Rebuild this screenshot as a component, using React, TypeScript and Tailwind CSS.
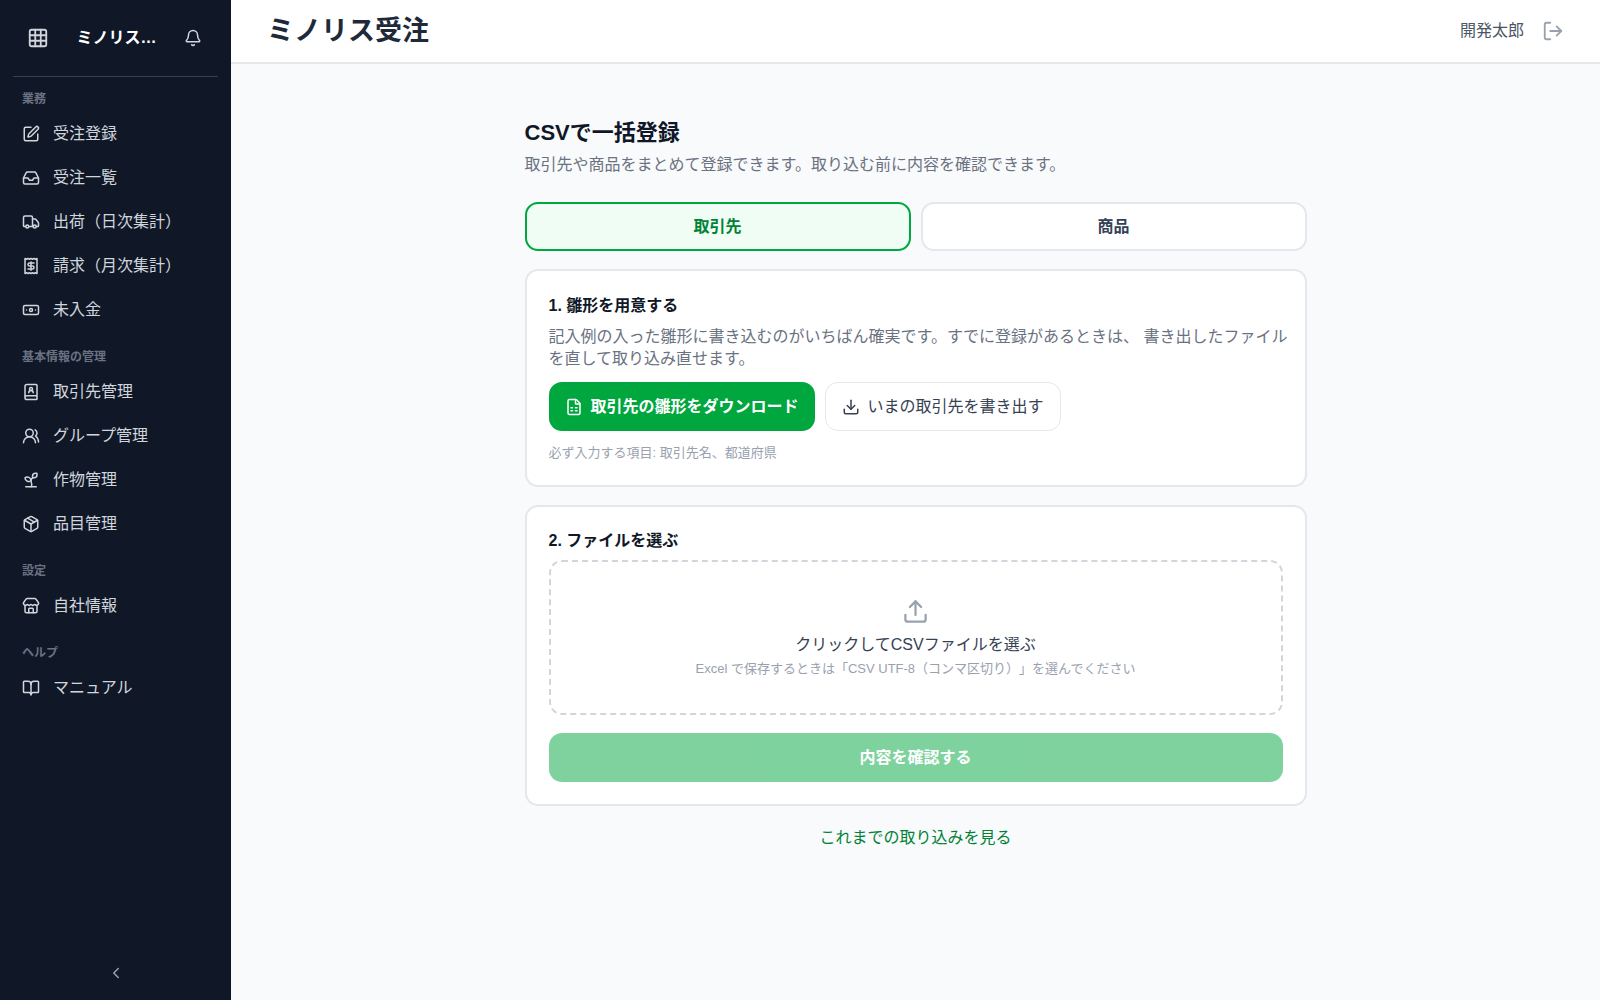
import { useState } from 'react';
import {
  Banknote,
  Bell,
  BookOpen,
  BookUser,
  ChevronLeft,
  Download,
  FileSpreadsheet,
  Grid3x3,
  Inbox,
  LogOut,
  Package,
  Receipt,
  Sprout,
  SquarePen,
  Store,
  Truck,
  Upload,
  UsersRound,
  type LucideIcon,
} from 'lucide-react';
import clsx from 'clsx';

interface NavItem {
  label: string;
  icon: LucideIcon;
}

const NAV_GROUPS: { title: string; items: NavItem[] }[] = [
  {
    title: '業務',
    items: [
      { label: '受注登録', icon: SquarePen },
      { label: '受注一覧', icon: Inbox },
      { label: '出荷（日次集計）', icon: Truck },
      { label: '請求（月次集計）', icon: Receipt },
      { label: '未入金', icon: Banknote },
    ],
  },
  {
    title: '基本情報の管理',
    items: [
      { label: '取引先管理', icon: BookUser },
      { label: 'グループ管理', icon: UsersRound },
      { label: '作物管理', icon: Sprout },
      { label: '品目管理', icon: Package },
    ],
  },
  { title: '設定', items: [{ label: '自社情報', icon: Store }] },
  { title: 'ヘルプ', items: [{ label: 'マニュアル', icon: BookOpen }] },
];

const TARGETS = [
  { name: '取引先', required: '取引先名、都道府県' },
  { name: '商品', required: '商品名、単価' },
];

function Sidebar() {
  return (
    <aside className="flex w-[231px] shrink-0 flex-col bg-gray-900 text-gray-300">
      <div className="mx-[13px] flex h-[77px] items-center justify-between border-b border-gray-700 pr-4 pl-[14px]">
        <button type="button" aria-label="アプリ一覧">
          <Grid3x3 size={22} />
        </button>
        <span className="text-base font-bold whitespace-nowrap text-white">ミノリス…</span>
        <button type="button" aria-label="お知らせ">
          <Bell size={18} />
        </button>
      </div>
      <nav className="flex-1 space-y-[3px]">
        {NAV_GROUPS.map((group) => (
          <div key={group.title} className="pt-3">
            <h2 className="px-[22px] pb-[3px] text-xs leading-5 font-semibold text-gray-500">{group.title}</h2>
            <ul>
              {group.items.map(({ label, icon: Icon }) => (
                <li key={label}>
                  <a href="#" className="flex h-11 items-center gap-[13px] px-[22px] text-base">
                    <Icon size={18} />
                    {label}
                  </a>
                </li>
              ))}
            </ul>
          </div>
        ))}
      </nav>
      <button type="button" aria-label="メニューを閉じる" className="flex h-[54px] items-center justify-center text-gray-400">
        <ChevronLeft size={18} />
      </button>
    </aside>
  );
}

function Header() {
  return (
    <header className="flex h-16 items-center justify-between border-b-2 border-gray-200 bg-white px-9">
      <h1 className="text-[27px] leading-8 font-bold text-gray-800">ミノリス受注</h1>
      <div className="flex items-center gap-[18px]">
        <span className="text-base text-gray-600">開発太郎</span>
        <button type="button" aria-label="ログアウト" className="text-gray-400">
          <LogOut size={22} />
        </button>
      </div>
    </header>
  );
}

export default function App() {
  const [selected, setSelected] = useState(0);
  const [file, setFile] = useState<File | null>(null);
  const target = TARGETS[selected];

  return (
    <div
      className="flex min-h-screen bg-gray-50 font-['Liberation_Sans','Noto_Sans_CJK_JP',sans-serif] [text-spacing-trim:space-all]"
      lang="ja"
    >
      <Sidebar />
      <div className="flex min-w-0 flex-1 flex-col">
        <Header />
        <main className="mx-auto w-full max-w-[782px] pt-[53px] pb-9">
          <h2 className="text-[22px] leading-8 font-bold text-gray-900">CSVで一括登録</h2>
          <p className="mt-1 text-base leading-6 text-gray-500">
            取引先や商品をまとめて登録できます。取り込む前に内容を確認できます。
          </p>

          <div className="mt-[25px] grid grid-cols-2 gap-[10px]">
            {TARGETS.map((t, index) => (
              <button
                key={t.name}
                type="button"
                aria-pressed={index === selected}
                onClick={() => setSelected(index)}
                className={clsx(
                  'h-[49px] rounded-[13px] border-2 text-base font-bold',
                  index === selected
                    ? 'border-green-600 bg-green-50 text-green-700'
                    : 'border-gray-200 bg-white text-gray-700',
                )}
              >
                {t.name}
              </button>
            ))}
          </div>

          <section className="mt-[18px] rounded-[13px] border-2 border-gray-200 bg-white p-[22px] pt-[23px]">
            <h3 className="text-base leading-6 font-bold text-gray-900">1. 雛形を用意する</h3>
            <p className="mt-2 -mr-3 text-base leading-[22px] text-gray-500">
              記入例の入った雛形に書き込むのがいちばん確実です。すでに登録があるときは、 書き出したファイルを直して取り込み直せます。
            </p>
            <div className="mt-3 flex flex-wrap gap-[10px]">
              <button
                type="button"
                className="flex h-[49px] items-center gap-2 rounded-[13px] bg-green-600 px-4 text-base font-bold text-white"
              >
                <FileSpreadsheet size={18} />
                {target.name}の雛形をダウンロード
              </button>
              <button
                type="button"
                className="flex h-[49px] items-center gap-2 rounded-[13px] border border-gray-200 bg-white px-4 text-base text-gray-700"
              >
                <Download size={18} />
                いまの{target.name}を書き出す
              </button>
            </div>
            <p className="mt-3 text-[13px] leading-5 text-gray-400">必ず入力する項目: {target.required}</p>
          </section>

          <section className="mt-[18px] rounded-[13px] border-2 border-gray-200 bg-white p-[22px]">
            <h3 className="text-base leading-6 font-bold text-gray-900">2. ファイルを選ぶ</h3>
            <label className="mt-[7px] flex h-[155px] cursor-pointer flex-col items-center justify-center rounded-[13px] border-2 border-dashed border-gray-300 pt-1">
              <Upload size={27} className="text-gray-400" />
              <span className="mt-2 text-base leading-6 text-gray-700">
                {file ? file.name : 'クリックしてCSVファイルを選ぶ'}
              </span>
              <span className="text-[13px] leading-6 text-gray-400">
                Excel で保存するときは「CSV UTF-8（コンマ区切り）」を選んでください
              </span>
              <input
                type="file"
                accept=".csv"
                className="sr-only"
                onChange={(e) => setFile(e.target.files?.[0] ?? null)}
              />
            </label>
            <button
              type="button"
              disabled={!file}
              className="mt-[18px] h-[49px] w-full rounded-[13px] bg-green-600 text-base font-bold text-white disabled:opacity-50"
            >
              内容を確認する
            </button>
          </section>

          <div className="mt-5 text-center">
            <a href="#" className="text-base leading-6 text-green-700">
              これまでの取り込みを見る
            </a>
          </div>
        </main>
      </div>
    </div>
  );
}
